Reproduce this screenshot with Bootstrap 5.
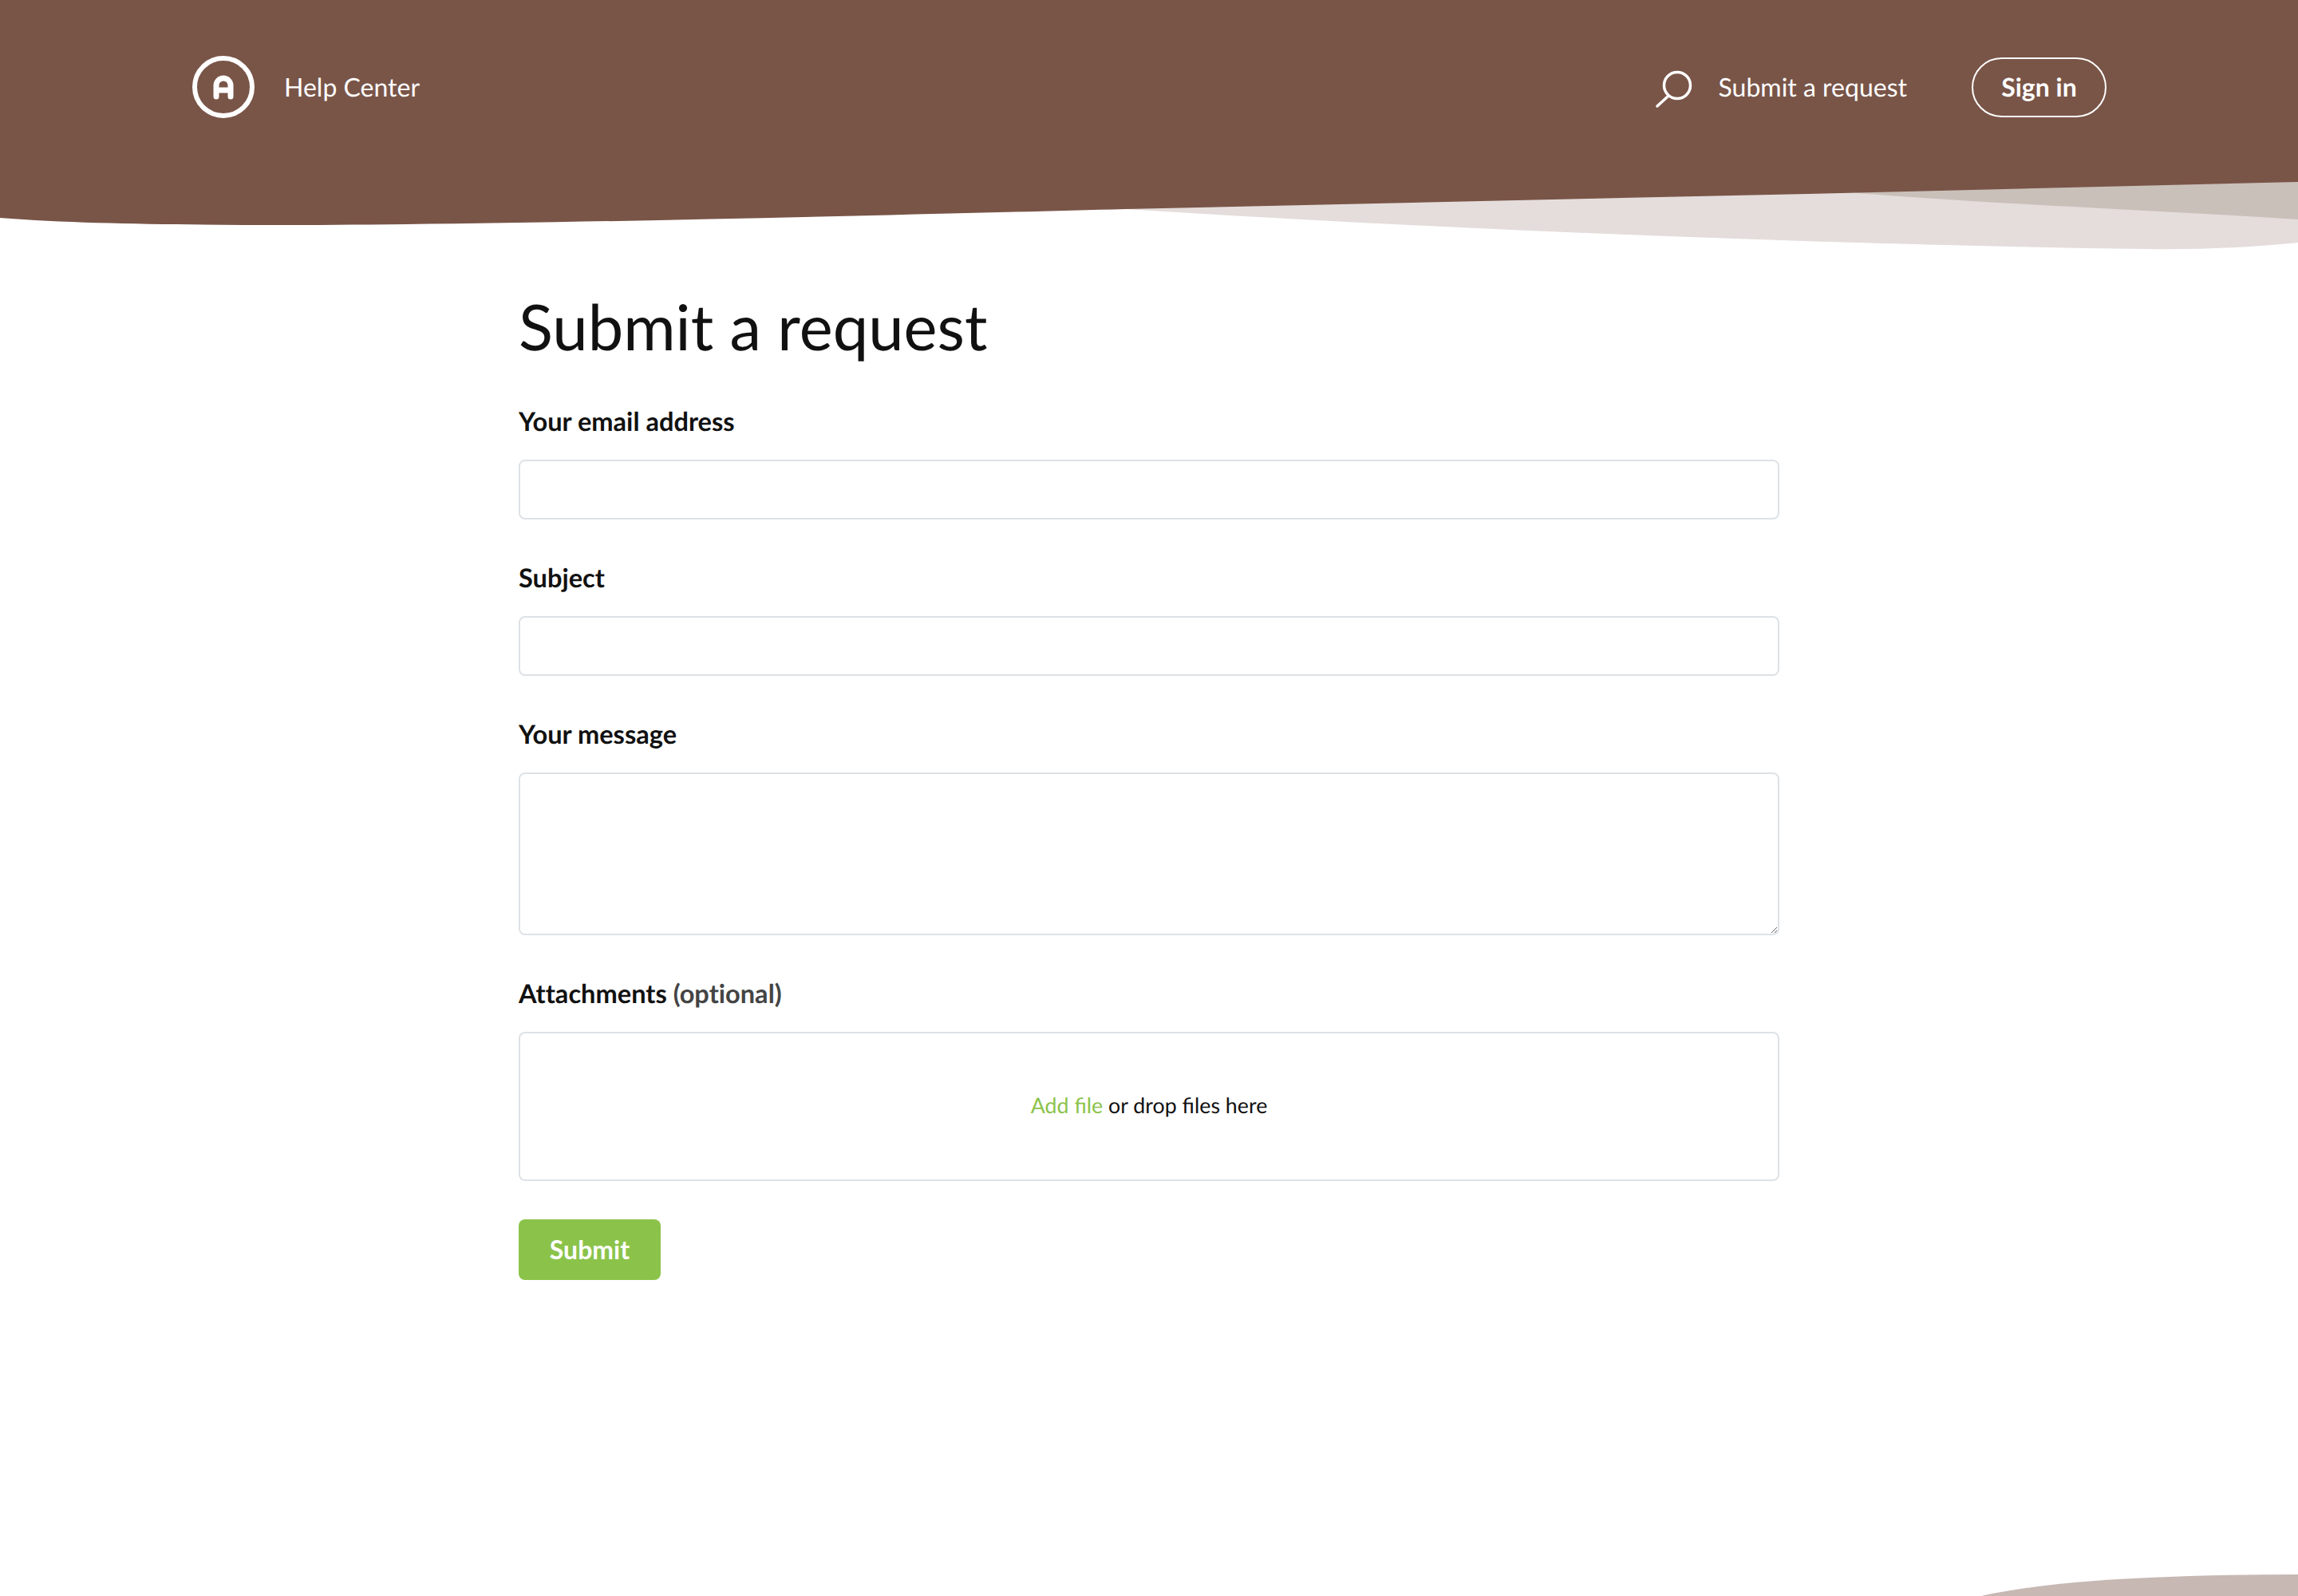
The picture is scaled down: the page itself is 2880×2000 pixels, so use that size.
<!DOCTYPE html>
<html lang="en">
  <head>
    <meta charset="utf-8">
    <title>Submit a request - Help Center</title>
    <link href="https://cdn.jsdelivr.net/npm/bootstrap@5.3.0/dist/css/bootstrap.min.css" rel="stylesheet">
    <style>
      body { font-family: Lato, "Liberation Sans", sans-serif; color: #111; background: #fff; text-rendering: geometricPrecision; }
      .page-wrap { min-height: 2000px; overflow: hidden; }
      .wave-top { top: 0; left: 0; width: 2880px; height: 320px; }
      .wave-bottom { bottom: 0; right: 0; width: 400px; height: 30px; }
      .hc-header { padding: 69px 240px 0; height: 320px; z-index: 1; }
      .hc-row { height: 80px; }
      .hc-title { font-size: 32px; color: #fff; margin-left: 36px; text-decoration: none; }
      .hc-link { font-size: 32px; color: #fff; margin-left: 32px; margin-right: 81px; text-decoration: none; font-variant-ligatures: none; }
      .hc-signin { font-size: 32px; font-weight: 700; color: #fff; height: 75px; width: 169px; border: 2px solid #fff; border-radius: 38px; padding: 0; line-height: 1; }
      .hc-signin:hover { color: #fff; }
      .hc-main { width: 1580px; z-index: 1; }
      .hc-heading { font-size: 79.5px; font-weight: 400; line-height: 96px; margin: 41px 0 51px; color: #111; font-variant-ligatures: none; }
      .hc-label { font-size: 32.6px; font-weight: 700; line-height: 40px; margin-bottom: 28px; color: #111; font-variant-ligatures: none; }
      .hc-muted { color: #444; font-weight: 700; }
      .hc-field { margin-bottom: 53px; }
      .hc-input { height: 75px; border: 2px solid #dee2e6; border-radius: 8px; font-size: 32px; }
      textarea.hc-input { height: 204px; }
      .hc-drop { height: 187px; border: 2px solid #dee2e6; border-radius: 8px; font-size: 26.8px; color: #111; padding-bottom: 2px; }
      .hc-drop a { color: #8bc34a; text-decoration: none; }
      .hc-submit { background: #8bc34a; color: #fff; font-size: 32px; font-weight: 700; width: 178px; height: 76px; border: 0; border-radius: 8px; padding: 0; }
      .hc-submit:hover { background: #8bc34a; color: #fff; }
    </style>
  </head>
  <body>
    <div class="page-wrap position-relative">
      <!-- waves behind the header -->
      <svg class="wave-top position-absolute" viewBox="0 0 2880 320">
        <path fill="#e4dddb" d="M1400 200H2880V304C2820 310 2760 313 2690 312C2300 307 1800 287 1411 262Z"/>
        <path fill="#cac0ba" d="M2300 200H2880V275C2680 262 2500 256 2328 242Z"/>
        <path fill="#795548" d="M0 0H2880V228L2328 241.5L1411 262C1100 270 600 283 306 282C190 281 90 280 0 273Z"/>
      </svg>

      <header class="hc-header position-relative d-flex align-items-start justify-content-between">
        <div class="hc-row d-flex align-items-center">
          <svg width="80" height="80" viewBox="0 0 80 80" fill="none" stroke="#fff">
            <circle cx="40" cy="40" r="36" stroke-width="6"/>
            <path stroke-width="7" stroke-linecap="round" d="M31 52V38A9 9 0 0 1 49 38V52M31 44H49"/>
          </svg>
          <a class="hc-title" href="#">Help Center</a>
        </div>
        <div class="hc-row d-flex align-items-center">
          <svg class="mt-1" width="48" height="48" viewBox="0 0 48 48" fill="none" stroke="#fff" stroke-width="3.5" stroke-linecap="round">
            <circle cx="28" cy="20" r="16.5"/>
            <path d="M16 34L3 46"/>
          </svg>
          <a class="hc-link" href="#">Submit a request</a>
          <a class="btn hc-signin d-flex align-items-center justify-content-center" href="#">Sign in</a>
        </div>
      </header>

      <main class="hc-main position-relative mx-auto">
        <h1 class="hc-heading">Submit a request</h1>
        <form>
          <div class="hc-field">
            <label class="form-label hc-label" for="email">Your email address</label>
            <input class="form-control hc-input" id="email" type="email">
          </div>
          <div class="hc-field">
            <label class="form-label hc-label" for="subject">Subject</label>
            <input class="form-control hc-input" id="subject" type="text">
          </div>
          <div class="hc-field">
            <label class="form-label hc-label" for="message">Your message</label>
            <textarea class="form-control hc-input" id="message"></textarea>
          </div>
          <div class="hc-field mb-0">
            <label class="form-label hc-label">Attachments <span class="hc-muted">(optional)</span></label>
            <div class="hc-drop d-flex align-items-center justify-content-center">
              <span><a href="#">Add file</a> or drop files here</span>
            </div>
          </div>
          <button class="btn hc-submit mt-5" type="submit">Submit</button>
        </form>
      </main>

      <svg class="wave-bottom position-absolute" viewBox="0 0 400 30">
        <path fill="#c7b8b3" d="M400 3C300 3 200 6 120 13C75 17 35 23 3 30H400Z"/>
      </svg>
    </div>
    <script src="https://cdn.jsdelivr.net/npm/bootstrap@5.3.0/dist/js/bootstrap.bundle.min.js"></script>
  </body>
</html>
